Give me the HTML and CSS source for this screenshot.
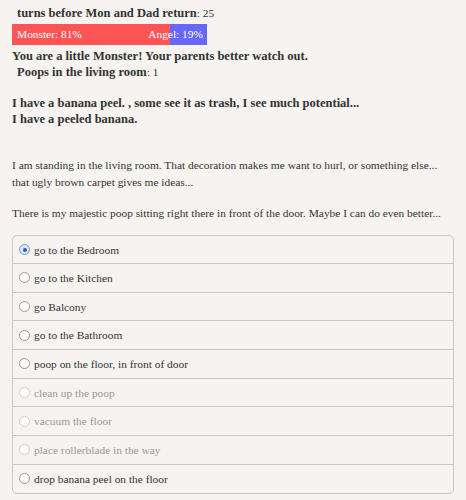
FILE: index.html
```html
<!DOCTYPE html>
<html>
<head>
<meta charset="utf-8">
<link rel="stylesheet" href="styles.css">
</head>
<body>
<div class="page">
  <div class="turns"><b>turns before Mon and Dad return</b>: 25</div>
  <div class="bar">
    <div class="monster" style="width:81%">Monster: 81%</div>
    <div class="angel" style="width:19%">Angel: 19%</div>
  </div>
  <div class="status"><b>You are a little Monster! Your parents better watch out.</b></div>
  <div class="poops"><b>Poops in the living room</b>: 1</div>
  <div class="inventory">
    <b>I have a banana peel. , some see it as trash, I see much potential...</b><br>
    <b>I have a peeled banana.</b>
  </div>
  <p class="desc">I am standing in the living room. That decoration makes me want to hurl, or something else...<br>that ugly brown carpet gives me ideas...</p>
  <p class="desc">There is my majestic poop sitting right there in front of the door. Maybe I can do even better...</p>
  <div class="options">
    <label class="opt"><span class="radio checked"></span>go to the Bedroom</label>
    <label class="opt"><span class="radio"></span>go to the Kitchen</label>
    <label class="opt"><span class="radio"></span>go Balcony</label>
    <label class="opt"><span class="radio"></span>go to the Bathroom</label>
    <label class="opt"><span class="radio"></span>poop on the floor, in front of door</label>
    <label class="opt disabled"><span class="radio"></span>clean up the poop</label>
    <label class="opt disabled"><span class="radio"></span>vacuum the floor</label>
    <label class="opt disabled"><span class="radio"></span>place rollerblade in the way</label>
    <label class="opt"><span class="radio"></span>drop banana peel on the floor</label>
  </div>
</div>
</body>
</html>
```
FILE: styles.css
```css
html, body {
  margin: 0;
  padding: 0;
  background: #f6f3f0;
}
body {
  font-family: "Liberation Serif", "Times New Roman", serif;
  font-size: 11.4px;
  color: #333;
}
b {
  font-size: 12.5px;
}
.page {
  padding: 5px 12px 0 12px;
}
.turns {
  padding-left: 5px;
  line-height: 16px;
}
.bar {
  display: flex;
  width: 195px;
  height: 21px;
  margin-top: 3px;
  color: #fff;
  line-height: 21px;
}
.monster {
  background: #fd5555;
  padding-left: 5px;
  box-sizing: border-box;
  white-space: nowrap;
}
.angel {
  background: #6767fb;
  text-align: right;
  padding-right: 4px;
  box-sizing: border-box;
  white-space: nowrap;
  direction: rtl;
}
.status {
  line-height: 16px;
  margin-top: 3px;
}
.poops {
  padding-left: 5px;
  line-height: 16px;
}
.inventory {
  margin-top: 15px;
  line-height: 16px;
}
.desc {
  margin: 14px 0 0 0;
  line-height: 17px;
  white-space: nowrap;
}
.inventory + .desc {
  margin-top: 30px;
}
.options {
  margin-top: 13px;
  width: 442px;
  border: 1px solid #c9c6c3;
  border-radius: 5px;
  display: flex;
  flex-direction: column;
  box-sizing: border-box;
}
.opt {
  display: flex;
  align-items: center;
  height: 27.7px;
  padding-left: 6px;
  border-top: 1px solid #c9c6c3;
  color: #333;
}
.opt:first-child {
  border-top: none;
  height: 27px;
}
.opt.disabled {
  color: #999;
}
.radio {
  width: 9px;
  height: 9px;
  border: 1px solid #999;
  border-radius: 50%;
  background: #fff;
  margin-right: 4px;
  box-sizing: content-box;
  display: flex;
  align-items: center;
  justify-content: center;
}
.opt.disabled .radio {
  border-color: #ccc;
}
.radio.checked {
  border-color: #7a9cc8;
  background: #dce8f7;
}
.radio.checked::after {
  content: "";
  width: 4px;
  height: 4px;
  border-radius: 50%;
  background: #2a5fb0;
}
```
